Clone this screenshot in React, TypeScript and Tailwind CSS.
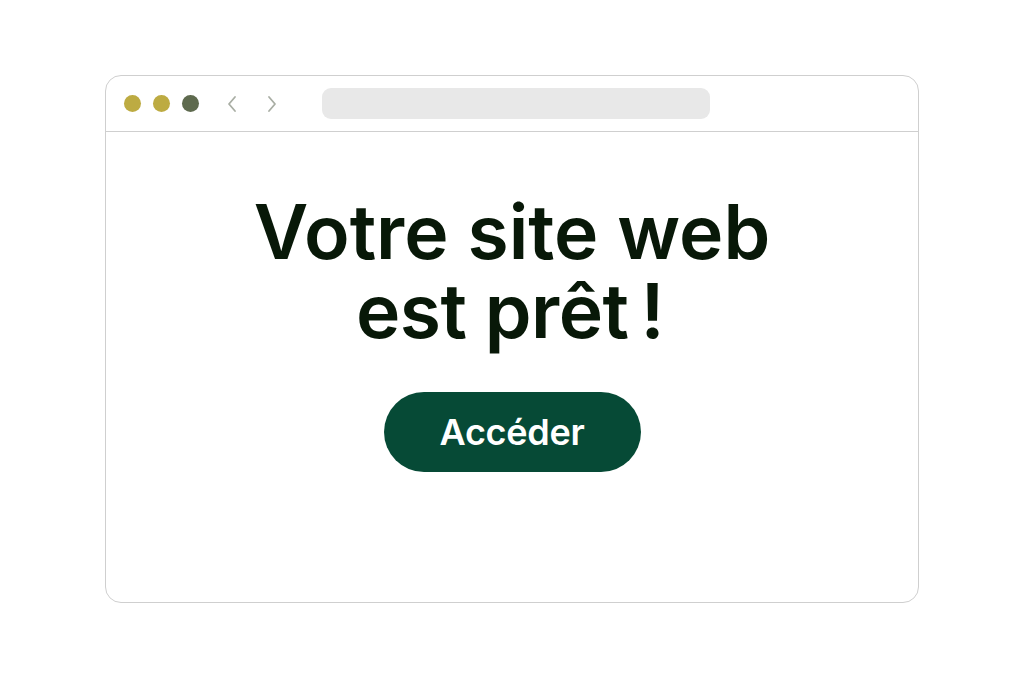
import React from "react";

export default function App() {
  return (
    <div className="w-[1024px] h-[683px] bg-white flex items-start justify-center pt-[75px]" style={{ fontFamily: "Inter, 'Noto Sans', sans-serif" }}>
      <div className="w-[814px] h-[528px] border border-[#cfcfcf] rounded-[16px] flex flex-col overflow-hidden">
        <div className="h-[56px] border-b border-[#cfcfcf] flex items-center pl-[18px] shrink-0">
          <div className="flex items-center gap-[12px]">
            <div className="w-[17px] h-[17px] rounded-full bg-[#bdab42]" />
            <div className="w-[17px] h-[17px] rounded-full bg-[#bdab42]" />
            <div className="w-[17px] h-[17px] rounded-full bg-[#5e6a4e]" />
          </div>
          <div className="flex items-center gap-[26px] ml-[26px]">
            <svg width="14" height="18" viewBox="0 0 14 18" fill="none" stroke="#a9aea4" strokeWidth="1.8" strokeLinecap="round" strokeLinejoin="round">
              <path d="M10 2 L4 9 L10 16" />
            </svg>
            <svg width="14" height="18" viewBox="0 0 14 18" fill="none" stroke="#a9aea4" strokeWidth="1.8" strokeLinecap="round" strokeLinejoin="round">
              <path d="M4 2 L10 9 L4 16" />
            </svg>
          </div>
          <div className="ml-[43px] w-[388px] h-[31px] rounded-[9px] bg-[#e8e8e8]" />
        </div>
        <div className="flex flex-col items-center pt-[60px]">
          <h1 className="text-[75px] leading-[79px] font-semibold text-[#081808] text-center">
            <span className="block">Votre site web</span>
            <span className="block pr-[4px] tracking-[-0.5px]">est prêt{"\u2009"}!</span>
          </h1>
          <button className="mt-[42px] w-[257px] h-[80px] rounded-full bg-[#064a36] text-white text-[36px] font-semibold tracking-[-0.3px]">
            Accéder
          </button>
        </div>
      </div>
    </div>
  );
}
